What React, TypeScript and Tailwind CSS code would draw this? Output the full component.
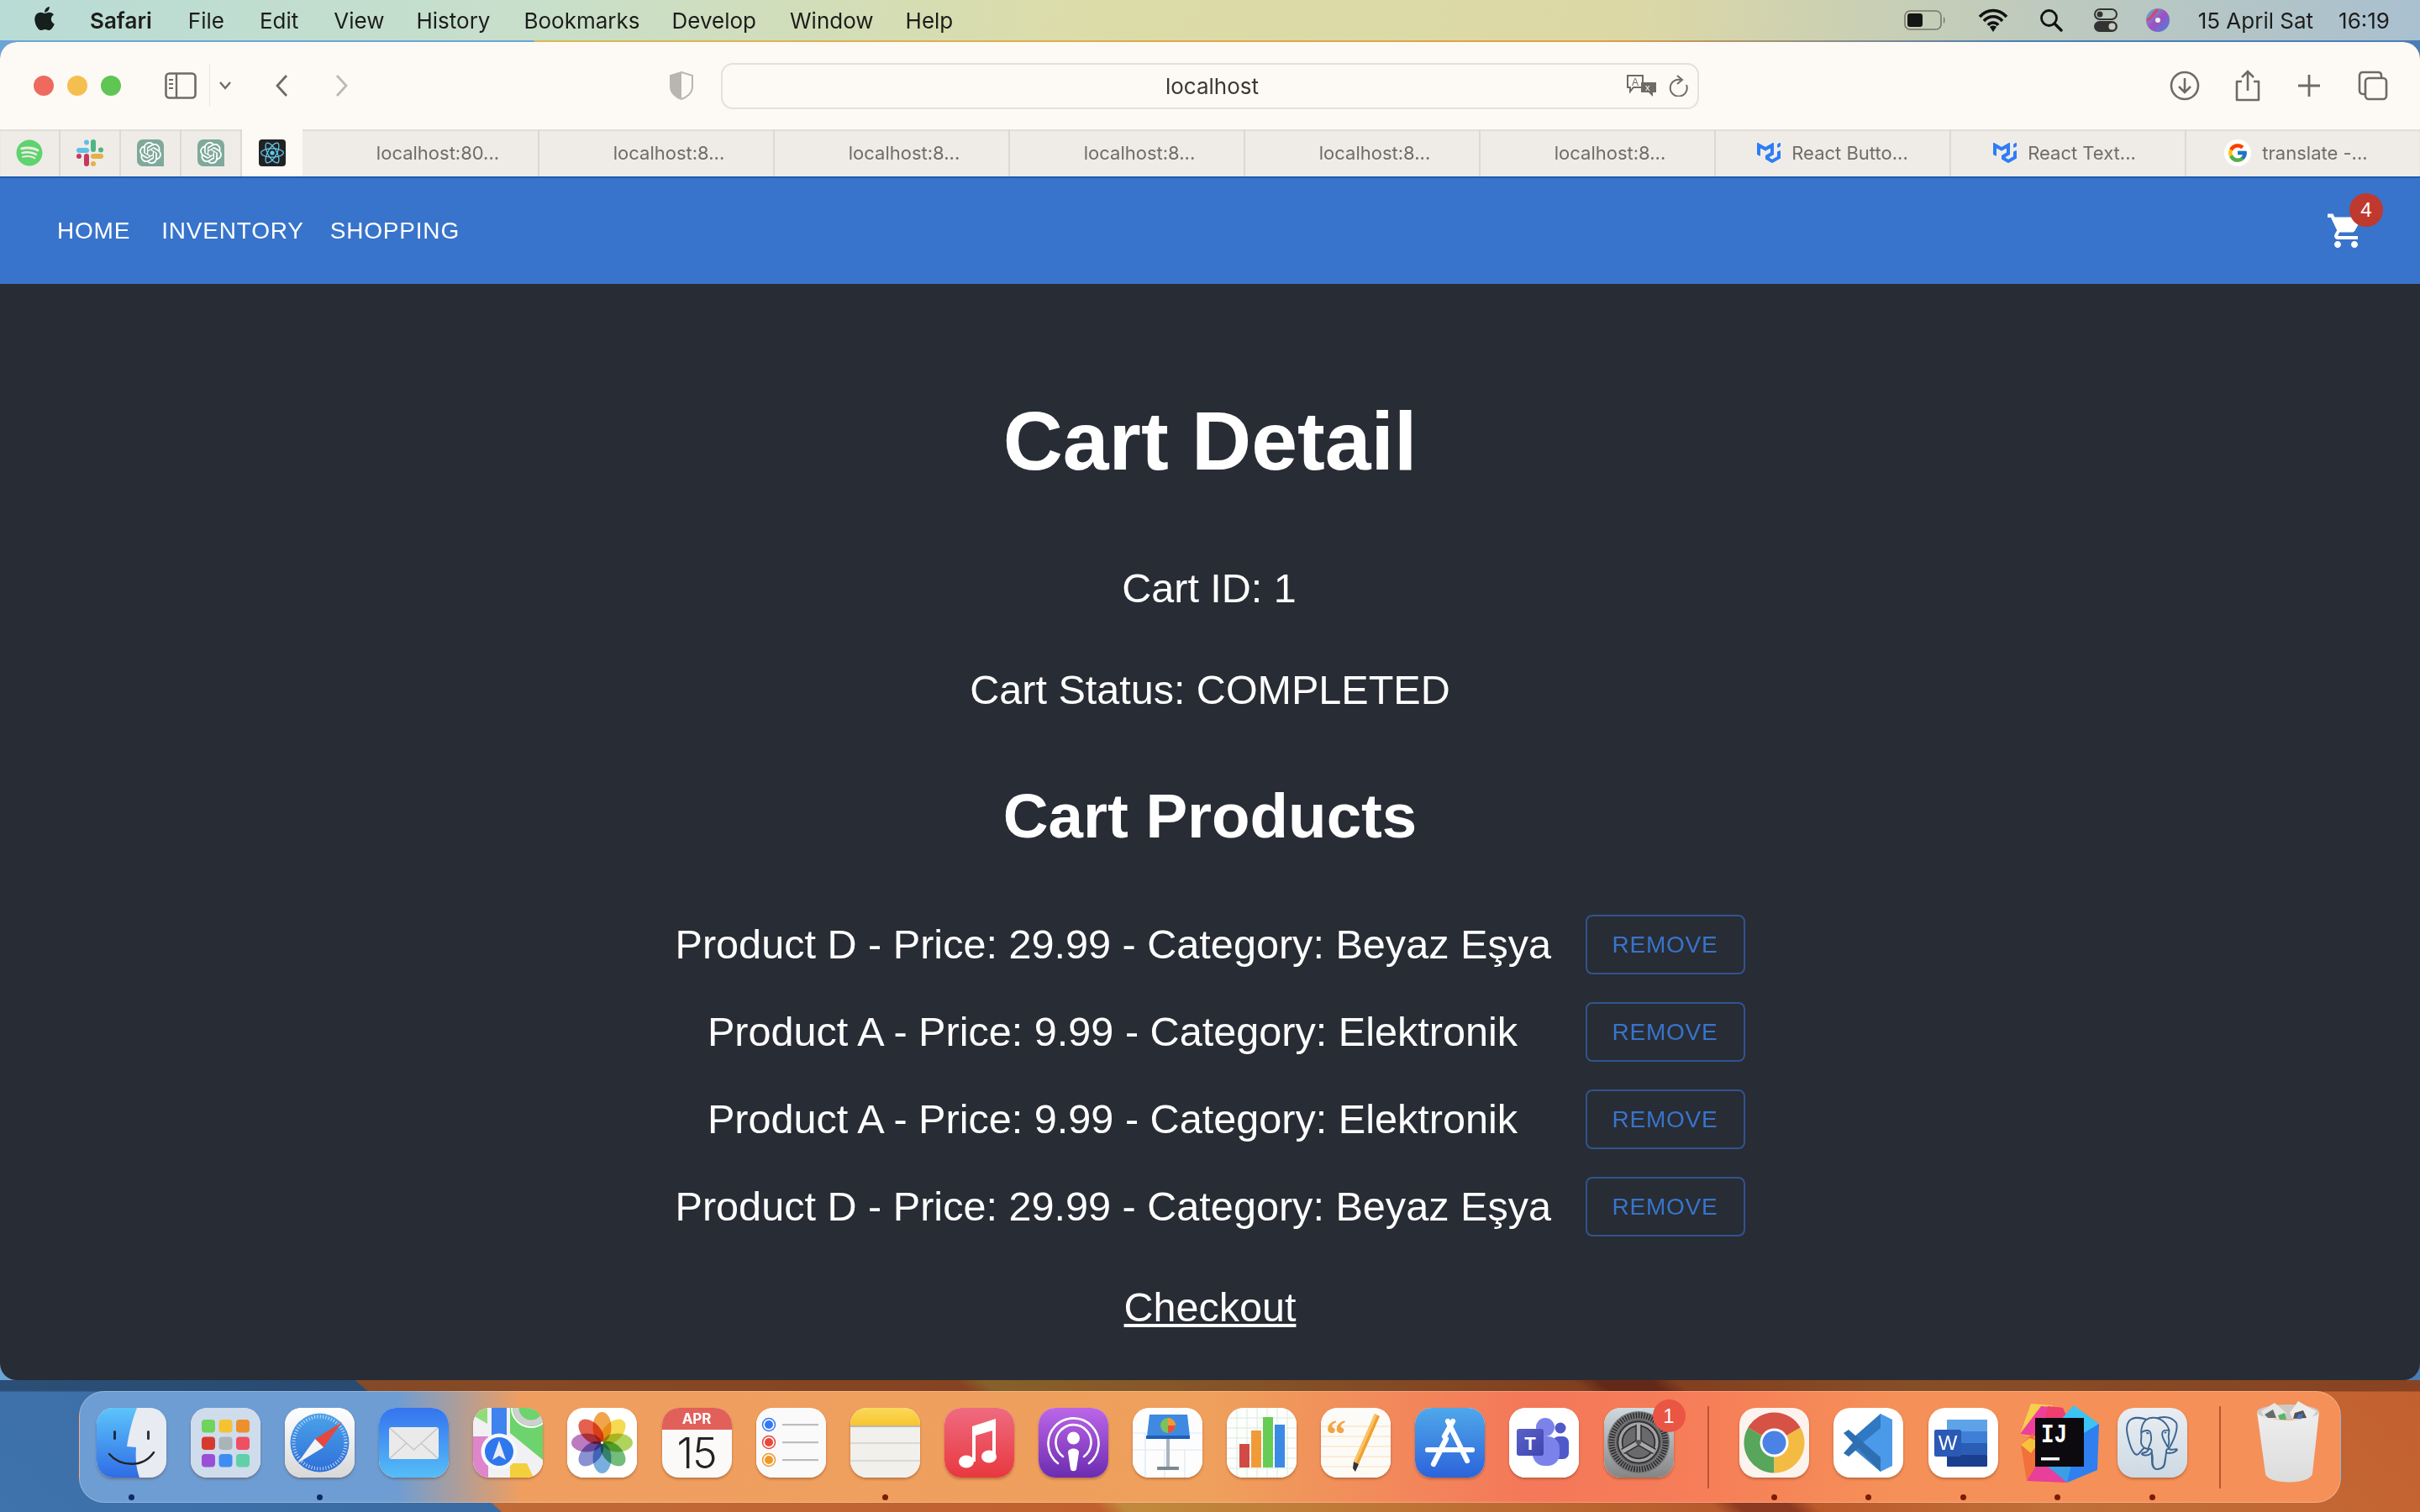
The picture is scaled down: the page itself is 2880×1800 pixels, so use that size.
import React from "react";
import { FaApple, FaSpotify } from "react-icons/fa";
import { FcGoogle } from "react-icons/fc";
import { SiMui, SiOpenai, SiReact, SiPostgresql } from "react-icons/si";

const Tile = ({ children, cls = "bg-white" }: { children: React.ReactNode; cls?: string }) => (
  <div className={`w-[83px] h-[83px] rounded-[20px] overflow-hidden shadow-[0_2px_3px_rgba(90,40,10,0.35)] ${cls}`}>
    <svg viewBox="0 0 83 83" className="w-[83px] h-[83px] block">{children}</svg>
  </div>
);

const Finder = () => (
  <Tile>
    <defs><linearGradient id="fb" x1="0" y1="0" x2="0" y2="1"><stop offset="0" stopColor="#5cc4fa" /><stop offset="1" stopColor="#2f6ce6" /></linearGradient></defs>
    <rect width="83" height="83" fill="url(#fb)" />
    <path d="M48 0C42 15 38 32 36 46L47 47C46 60 47 72 51 83L83 83L83 0Z" fill="#e8ebf1" />
    <rect x="20" y="27" width="3" height="11" rx="1.5" fill="#1d2a44" />
    <rect x="60" y="27" width="3" height="11" rx="1.5" fill="#333" />
    <path d="M15 55C28 70 55 72 68 53" fill="none" stroke="#222" strokeWidth="2.4" strokeLinecap="round" />
  </Tile>
);

const Launchpad = () => {
  const c = ["#6fd35c", "#f6c232", "#ee8f2e", "#d8392e", "#aab4b8", "#ee4f62", "#9a4fd6", "#3f8cf2", "#5fd0a8"];
  return (
    <Tile>
      <rect width="83" height="83" fill="#cfdcec" />
      {c.map((f, i) => (
        <rect key={i} x={13 + (i % 3) * 20.5} y={14 + Math.floor(i / 3) * 20.5} width="16" height="15.5" rx="4" fill={f} />
      ))}
    </Tile>
  );
};

const Safari = () => (
  <Tile>
    <defs><linearGradient id="sf" x1="0" y1="0" x2="0" y2="1"><stop offset="0" stopColor="#fff" /><stop offset="1" stopColor="#d8d8d8" /></linearGradient>
      <linearGradient id="sb" x1="0" y1="0" x2="0" y2="1"><stop offset="0" stopColor="#4ba3ea" /><stop offset="1" stopColor="#2f6fd8" /></linearGradient></defs>
    <rect width="83" height="83" fill="url(#sf)" />
    <circle cx="41.5" cy="41.5" r="35" fill="url(#sb)" />
    <circle cx="41.5" cy="41.5" r="31" fill="none" stroke="#e8f1fb" strokeWidth="4" strokeDasharray="0.8 2.6" />
    <polygon points="68,17 36,37 46,47" fill="#e5483c" />
    <polygon points="15,66 36,37 46,47" fill="#f4f4f4" />
  </Tile>
);

const Mail = () => (
  <Tile>
    <defs><linearGradient id="ml" x1="0" y1="0" x2="0" y2="1"><stop offset="0" stopColor="#3574ee" /><stop offset="1" stopColor="#55bdf8" /></linearGradient></defs>
    <rect width="83" height="83" fill="url(#ml)" />
    <rect x="12" y="23" width="59" height="38" rx="3" fill="#eaeaea" />
    <path d="M13 24L41.5 50L70 24M13 60L33 42M70 60L50 42" fill="none" stroke="#c8c8c8" strokeWidth="1.6" />
  </Tile>
);

const Maps = () => (
  <Tile>
    <rect width="83" height="83" fill="#f1f1f4" />
    <polygon points="44,0 83,0 83,62 44,30" fill="#6dd36c" />
    <polygon points="0,0 17,0 17,19 0,9" fill="#8fdc7a" />
    <rect x="22" y="0" width="18" height="36" fill="#3f83ee" />
    <rect x="0" y="34" width="18" height="49" fill="#de85cc" />
    <polygon points="44,66 64,66 72,83 44,83" fill="#f4cf3c" />
    <circle cx="69" cy="0" r="18" fill="#6dd36c" stroke="#cfcfd2" strokeWidth="7" />
    <circle cx="69" cy="0" r="23" fill="none" stroke="#fff" strokeWidth="2" />
    <circle cx="31" cy="52" r="21.5" fill="#f6f8fb" />
    <circle cx="31" cy="52" r="17" fill="#2f78ec" />
    <path d="M31 39L39 62L31 57L23 62Z" fill="#e9edf4" />
  </Tile>
);

const Photos = () => {
  const c = ["#f09a36", "#f5d63f", "#a7cf4c", "#62b56e", "#6aa6dc", "#7e86cc", "#b56cb8", "#e44e3a"];
  return (
    <Tile>
      <rect width="83" height="83" fill="#fff" />
      {c.map((f, i) => (
        <ellipse key={i} cx="41.5" cy="23" rx="11" ry="18" fill={f} opacity="0.9" className="mix-blend-multiply" transform={`rotate(${i * 45} 41.5 41.5)`} />
      ))}
      <circle cx="41.5" cy="41.5" r="1.5" fill="#fff" />
    </Tile>
  );
};

const Calendar = () => (
  <div className="w-[83px] h-[83px] rounded-[20px] overflow-hidden bg-[#fbfaf9] shadow-[0_2px_3px_rgba(90,40,10,0.35)] flex flex-col items-center font-['Inter',sans-serif]">
    <div className="w-full h-[26px] bg-[#e2605a] text-white text-[17px] leading-[26px] font-bold text-center">APR</div>
    <div className="text-[#222] text-[50px] leading-[56px] font-light tracking-[-1px]">15</div>
  </div>
);

const Reminders = () => (
  <Tile>
    <rect width="83" height="83" fill="#fbfafa" />
    {[["#3478f6", 20], ["#e9483d", 41], ["#ee9a2a", 62]].map(([f, y], i) => (
      <g key={i}>
        <circle cx="15" cy={y as number} r="7.5" fill="none" stroke={f as string} strokeWidth="1.5" />
        <circle cx="15" cy={y as number} r="5" fill={f as string} />
        <rect x="31" y={(y as number) - 1} width="43" height="2.2" fill="#bcbcbc" />
      </g>
    ))}
  </Tile>
);

const Notes = () => (
  <Tile>
    <defs><linearGradient id="nt" x1="0" y1="0" x2="0" y2="1"><stop offset="0" stopColor="#fbd95a" /><stop offset="1" stopColor="#f7c52f" /></linearGradient></defs>
    <rect width="83" height="83" fill="#f2f0ec" />
    <rect width="83" height="21" fill="url(#nt)" />
    <rect y="21" width="83" height="2" fill="#bdb8ae" />
    <rect y="41" width="83" height="2" fill="#dcd9d3" />
    <rect y="62" width="83" height="2" fill="#dcd9d3" />
  </Tile>
);

const Music = () => (
  <Tile>
    <defs><linearGradient id="mu" x1="0" y1="0" x2="0" y2="1"><stop offset="0" stopColor="#ef6b80" /><stop offset="1" stopColor="#e8383f" /></linearGradient></defs>
    <rect width="83" height="83" fill="url(#mu)" />
    <path d="M33 22L61 13V57H57V27L37 33V64H33Z" fill="#fff" />
    <ellipse cx="26" cy="64" rx="9" ry="7.5" fill="#fff" />
    <ellipse cx="53" cy="58" rx="9" ry="7.5" fill="#fff" />
  </Tile>
);

const Podcasts = () => (
  <Tile>
    <defs><linearGradient id="po" x1="0" y1="0" x2="0" y2="1"><stop offset="0" stopColor="#bc66e8" /><stop offset="1" stopColor="#6c2cb0" /></linearGradient></defs>
    <rect width="83" height="83" fill="url(#po)" />
    <path d="M23 66A30 30 0 1 1 60 66" fill="none" stroke="#fff" strokeWidth="2.6" strokeLinecap="round" />
    <path d="M29 58A21 21 0 1 1 54 58" fill="none" stroke="#fff" strokeWidth="2.6" strokeLinecap="round" />
    <circle cx="41.5" cy="36" r="7.5" fill="#fff" />
    <path d="M35 53C35 47 48 47 48 53L45 73C44 76 39 76 38 73Z" fill="#fff" />
  </Tile>
);

const Keynote = () => (
  <Tile>
    <rect width="83" height="83" fill="#fdfdfe" />
    <path d="M0 30H83M0 50H83M15 30V83M38 50V83M62 50V83" stroke="#dbe7f3" strokeWidth="1.2" fill="none" />
    <polygon points="20,8 65,8 68,34 17,34" fill="#3f8ae0" />
    <rect x="16" y="33" width="52" height="4" fill="#1f5fb8" />
    <circle cx="42" cy="21" r="9" fill="#7fc25a" />
    <path d="M42 21V12A9 9 0 0 1 51 21Z" fill="#ef9a34" />
    <path d="M42 21H51A9 9 0 0 1 42 30Z" fill="#e2533f" />
    <rect x="40" y="37" width="4" height="36" fill="#a9b4c0" />
    <rect x="29" y="70" width="26" height="4" rx="1" fill="#7d8790" />
  </Tile>
);

const Numbers = () => (
  <Tile>
    <rect width="83" height="83" fill="#fdfefd" />
    <path d="M0 12H83M0 24H83M0 36H83M0 48H83M0 60H83M0 72H83M12 0V83M24 0V83M36 0V83M48 0V83M60 0V83M72 0V83" stroke="#d8ecd8" strokeWidth="1" />
    <rect x="15" y="43" width="12" height="28" fill="#d04a46" />
    <rect x="29" y="27" width="12" height="44" fill="#f09b38" />
    <rect x="43" y="11" width="12" height="60" fill="#67cc55" />
    <rect x="57" y="20" width="12" height="51" fill="#3b8ae6" />
  </Tile>
);

const Pages = () => (
  <Tile>
    <rect width="83" height="83" fill="#fdfbf7" />
    <path d="M0 22H83M0 34H83M0 46H83M0 58H83M0 70H83" stroke="#fbe7cd" strokeWidth="1.6" />
    <text x="6" y="48" fontFamily="Liberation Serif, serif" fontSize="48" fontWeight="700" fill="#f0a542">“</text>
    <path d="M64 7L70 10L45 67L39 64Z" fill="#f0a030" />
    <path d="M39 64L45 67L41 76L38 72Z" fill="#333" />
    <path d="M64 7L67 8.5L42 65.5L39 64Z" fill="#f8c465" />
  </Tile>
);

const AppStore = () => (
  <Tile>
    <defs><linearGradient id="as" x1="0" y1="0" x2="0" y2="1"><stop offset="0" stopColor="#4fa8ea" /><stop offset="1" stopColor="#2c63db" /></linearGradient></defs>
    <rect width="83" height="83" fill="url(#as)" />
    <path d="M22 67L37 37M45 16L35 34M39 16L62 63M15 50H68" stroke="#fff" strokeWidth="6.2" strokeLinecap="round" fill="none" />
  </Tile>
);

const Teams = () => (
  <Tile>
    <defs><linearGradient id="tm" x1="0" y1="0" x2="1" y2="1"><stop offset="0" stopColor="#5a62c8" /><stop offset="1" stopColor="#3f45b0" /></linearGradient></defs>
    <rect width="83" height="83" fill="#fff" />
    <circle cx="61" cy="24" r="6.5" fill="#5059c9" />
    <rect x="52" y="34" width="19" height="27" rx="7" fill="#5059c9" />
    <circle cx="43" cy="23" r="11" fill="#7b83eb" />
    <rect x="28" y="34" width="32" height="35" rx="14" fill="#7b83eb" />
    <rect x="9" y="25" width="32" height="32" rx="3" fill="url(#tm)" />
    <text x="25" y="50" textAnchor="middle" fontFamily="Liberation Sans, sans-serif" fontWeight="700" fontSize="22" fill="#fff">T</text>
  </Tile>
);

const Settings = () => (
  <div className="relative">
    <Tile>
      <defs><linearGradient id="se" x1="0" y1="0" x2="0" y2="1"><stop offset="0" stopColor="#cfd9df" /><stop offset="1" stopColor="#858585" /></linearGradient></defs>
      <rect width="83" height="83" fill="url(#se)" />
      <circle cx="41" cy="41" r="37" fill="#77777a" />
      <circle cx="41" cy="41" r="32" fill="none" stroke="#2a2a2c" strokeWidth="7" strokeDasharray="1.5 1.7" />
      <circle cx="41" cy="41" r="27" fill="#5e5e60" />
      <circle cx="41" cy="41" r="22" fill="#6a6a6c" stroke="#2f2f31" strokeWidth="7" />
      <circle cx="41" cy="41" r="22" fill="none" stroke="#a2a2a4" strokeWidth="3.5" />
      <path d="M41 41V20M41 41L22 52M41 41L60 52" stroke="#2f2f31" strokeWidth="7.5" />
      <path d="M41 41V19M41 41L22 52M41 41L60 52" stroke="#a9a9ab" strokeWidth="4.5" />
      <circle cx="41" cy="41" r="3" fill="#555" />
    </Tile>
    <div className="absolute left-[58px] top-[-10px] w-[39px] h-[39px] rounded-full bg-[#ea5544] text-white text-[24px] leading-[39px] text-center font-['Liberation_Sans',sans-serif]">1</div>
  </div>
);

const Chrome = () => (
  <Tile cls="bg-[#fdf3ee]">
    <path d="M41.500 41.500L10.300 23.500A36 36 0 0 1 72.700 23.500Z" fill="#d65244" />
    <path d="M41.500 41.500L10.300 23.500A36 36 0 0 0 41.500 77.500Z" fill="#58a55c" />
    <path d="M41.500 41.500L72.700 23.500A36 36 0 0 1 41.500 77.500Z" fill="#f3bb42" />
    <circle cx="41.5" cy="41.5" r="17" fill="#fff" />
    <circle cx="41.5" cy="41.5" r="14" fill="#4b82e6" />
  </Tile>
);

const VSCode = () => (
  <Tile>
    <polygon points="56,7 70,14 70,69 56,76 30,42" fill="#4b9ae9" />
    <polygon points="56,7 56,24 34,42 24,35" fill="#2f78c2" />
    <polygon points="56,76 56,59 34,42 24,49" fill="#3a83cc" />
    <polygon points="12,30 18,26 56,59 56,76" fill="#2e6fb2" />
    <polygon points="12,54 18,58 34,44 26,38" fill="#2e6fb2" />
  </Tile>
);

const Word = () => (
  <Tile>
    <rect x="22" y="14" width="48" height="14" fill="#5ea3e8" />
    <rect x="22" y="28" width="48" height="14" fill="#3f80d6" />
    <rect x="22" y="42" width="48" height="14" fill="#2a5db5" />
    <rect x="22" y="56" width="48" height="14" rx="1" fill="#1a3f8e" />
    <rect x="7" y="26" width="32" height="32" rx="2" fill="#2a5ab5" />
    <text x="23" y="50" textAnchor="middle" fontFamily="Liberation Sans, sans-serif" fontSize="24" fill="#fff">W</text>
  </Tile>
);

const Idea = () => (
  <svg viewBox="0 0 83 83" className="w-[83px] h-[83px] overflow-visible">
    <polygon points="10,-5 36,-3 30,40 -3,31" fill="#f7cf4a" />
    <polygon points="22,-2 48,0 54,40 -3,31" fill="#ee3f9e" />
    <polygon points="30,-2 48,0 60,28 22,30" fill="#ee3f6e" />
    <polygon points="-2,44 12,30 26,60 5,87" fill="#f2703c" />
    <polygon points="8,36 20,40 10,54 -2,44" fill="#f6c23c" />
    <polygon points="5,87 28,50 53,89" fill="#e83f9a" />
    <polygon points="61,-3 91,19 60,50 40,20" fill="#3cc4f4" />
    <polygon points="91,19 89,74 53,89 40,50" fill="#2f7ff0" />
    <polygon points="30,70 53,89 60,60" fill="#3a9fe6" />
    <rect x="15" y="12" width="58" height="58" fill="#0c0a0e" />
    <text x="22" y="41" textLength="31" lengthAdjust="spacingAndGlyphs" fontFamily="Liberation Mono, monospace" fontWeight="700" fontSize="32" fill="#fff">IJ</text>
    <rect x="22" y="59" width="22" height="3.5" fill="#fff" />
  </svg>
);

const Postgres = () => (
  <div className="w-[83px] h-[83px] rounded-[20px] bg-[linear-gradient(180deg,#e9eef3,#cdd9e3)] flex items-center justify-center shadow-[0_2px_3px_rgba(90,40,10,0.35)]">
    <SiPostgresql className="w-[64px] h-[64px] text-[#3d6590]" />
  </div>
);

const Trash = () => (
  <svg viewBox="0 0 83 83" className="w-[83px] h-[83px] overflow-visible">
    <defs><linearGradient id="tr" x1="0" y1="0" x2="0" y2="1"><stop offset="0" stopColor="#eeeeee" /><stop offset="1" stopColor="#dcdcdc" /></linearGradient></defs>
    <path d="M5 5C20 18 62 18 79 5L71 78C69 92 17 92 15 78Z" fill="url(#tr)" />
    <ellipse cx="42" cy="5" rx="37" ry="9" fill="#cfc9c5" />
    <polygon points="10,4 26,-6 40,6 34,14 14,12" fill="#e6e6e6" />
    <polygon points="44,6 54,-8 66,-1 76,4 70,12 48,14" fill="#ececec" />
    <polygon points="14,8 24,2 28,12 18,12" fill="#6a6a6a" />
    <polygon points="30,9 38,6 40,14 32,14" fill="#59b46a" />
    <polygon points="50,6 60,3 64,12 48,13" fill="#54524e" />
    <polygon points="54,8 60,7 58,13 52,13" fill="#3f74c6" />
  </svg>
);

const DockItem = ({ children, dot }: { children: React.ReactNode; dot?: string }) => (
  <div className="flex flex-col items-center w-[83px] shrink-0">
    {children}
    <div className={`mt-[20px] w-[7px] h-[7px] rounded-full ${dot ?? "bg-transparent"}`} />
  </div>
);

const Tab = ({ icon, active }: { icon: React.ReactNode; active?: boolean }) => (
  <div className={`w-[72px] h-full flex items-center justify-center shrink-0 ${active ? "bg-[#fdfaf5] w-[71px]" : "border-r-2 border-[#dcd9d3]"}`}>{icon}</div>
);

const TextTab = ({ text, icon, last, cls = "w-[280px]" }: { text: string; icon?: React.ReactNode; last?: boolean; cls?: string }) => (
  <div className={`h-full shrink-0 flex items-center justify-center gap-[13px] text-[22px] text-[#6f6d6a] ${cls} ${last ? "" : "border-r-2 border-[#dcd9d3]"}`}>
    {icon}
    <span>{text}</span>
  </div>
);

const Openai = () => (
  <div className="w-[32px] h-[32px] rounded-[7px] rounded-br-none bg-[#7fa99b] flex items-center justify-center">
    <SiOpenai className="w-[26px] h-[26px] text-white" />
  </div>
);

const Slack = () => (
  <svg viewBox="0 0 32 32" className="w-[32px] h-[32px]">
    <rect x="0" y="10" width="15" height="6" rx="3" fill="#62bfe4" />
    <circle cx="12" cy="3.5" r="3" fill="#62bfe4" />
    <rect x="17" y="0" width="6" height="15" rx="3" fill="#4fb583" />
    <circle cx="29" cy="12.5" r="3" fill="#4fb583" />
    <rect x="17" y="17" width="15" height="6" rx="3" fill="#e4b04c" />
    <circle cx="20" cy="29" r="3" fill="#e4b04c" />
    <rect x="9" y="17" width="6" height="15" rx="3" fill="#c9375c" />
    <circle cx="3" cy="20" r="3" fill="#c9375c" />
  </svg>
);

const Row = ({ text }: { text: string }) => (
  <div className="flex items-center h-[71px] mb-[33px]">
    <div className="w-[1041px] text-center text-[48.6px] text-white whitespace-nowrap">{text}</div>
    <button className="ml-[42px] w-[190px] h-[71px] rounded-[8px] border-2 border-[#2f5490] text-[#3874cb] text-[28px] tracking-[0.8px]">REMOVE</button>
  </div>
);

export default function App() {
  return (
    <div className="w-[2880px] h-[1800px] overflow-hidden flex flex-col font-['Liberation_Sans',sans-serif] bg-[linear-gradient(90deg,#6aa5d8_0,#6aa5d8_635px,#d9b955_636px,#e0a044_1900px,#4a7db8_2400px,#4a7db8_100%)]">
      {/* menu bar */}
      <div className="h-[48px] shrink-0 flex items-center font-['Inter',sans-serif] text-[26px] text-[#1d1d1b] bg-[linear-gradient(90deg,#b9dcd6_0,#c8dfca_640px,#dcdca8_1300px,#dcd8a6_1950px,#c4cdb8_2300px,#a9c0d0_2880px)]">
        <FaApple className="ml-[38px] w-[30px] h-[32px] text-[#15201c] mb-[4px]" />
        <div className="ml-[39px] font-semibold">Safari</div>
        <div className="ml-[43px]">File</div>
        <div className="ml-[42px]">Edit</div>
        <div className="ml-[42px]">View</div>
        <div className="ml-[38px]">History</div>
        <div className="ml-[40px]">Bookmarks</div>
        <div className="ml-[38px]">Develop</div>
        <div className="ml-[40px]">Window</div>
        <div className="ml-[38px]">Help</div>
        <div className="flex-1" />
        <svg viewBox="0 0 50 24" className="w-[50px] h-[24px]">
          <rect x="1" y="1" width="43" height="22" rx="6" fill="none" stroke="#77776a" strokeWidth="1.6" />
          <rect x="4" y="4" width="18" height="16" rx="3" fill="#151515" />
          <path d="M47 8C49 9 49 15 47 16Z" fill="#77776a" />
        </svg>
        <svg viewBox="0 0 36 28" className="ml-[38px] w-[36px] h-[28px]">
          <path d="M2 10C11 0 25 0 34 10M7 15C13 8 23 8 29 15M12 20C15 16 21 16 24 20" fill="none" stroke="#111" strokeWidth="3.6" />
          <path d="M14 22L18 28L22 22C20 20 16 20 14 22Z" fill="#111" />
        </svg>
        <svg viewBox="0 0 28 28" className="ml-[37px] w-[28px] h-[28px]">
          <circle cx="11.5" cy="11.5" r="9" fill="none" stroke="#111" strokeWidth="2.8" />
          <path d="M18 18L26 26" stroke="#111" strokeWidth="3.4" strokeLinecap="round" />
        </svg>
        <svg viewBox="0 0 28 28" className="ml-[37px] w-[28px] h-[28px]">
          <rect x="1" y="1" width="26" height="12" rx="6" fill="none" stroke="#333" strokeWidth="2" />
          <circle cx="7" cy="7" r="3.5" fill="#333" />
          <rect x="0" y="15" width="28" height="13" rx="6.5" fill="#333" />
          <circle cx="21.5" cy="21.5" r="4" fill="#c8cdbb" />
        </svg>
        <svg viewBox="0 0 28 28" className="ml-[34px] w-[28px] h-[28px]">
          <defs><linearGradient id="si" x1="0" y1="0" x2="1" y2="1"><stop offset="0" stopColor="#49c6c8" /><stop offset="0.5" stopColor="#a04fc0" /><stop offset="1" stopColor="#3a8ae0" /></linearGradient></defs>
          <circle cx="14" cy="14" r="14" fill="url(#si)" />
          <circle cx="14" cy="14" r="3" fill="#f0f0f0" />
          <path d="M1 14C8 12 8 4 14 2" fill="none" stroke="#d9436f" strokeWidth="3" />
        </svg>
        <div className="ml-[34px] whitespace-nowrap">15 April Sat</div>
        <div className="ml-[30px] mr-[36px]">16:19</div>
      </div>

      {/* browser window */}
      <div className="mt-[2px] h-[1593px] shrink-0 rounded-[20px] overflow-hidden flex flex-col bg-[#282c34]">
        <div className="h-[104px] shrink-0 bg-[#fdfaf5] flex items-center pl-[40px]">
          <div className="w-[24px] h-[24px] rounded-full bg-[#ee6a5f]" />
          <div className="ml-[16px] w-[24px] h-[24px] rounded-full bg-[#f5bf4f]" />
          <div className="ml-[16px] w-[24px] h-[24px] rounded-full bg-[#61c554]" />
          <svg viewBox="0 0 38 32" className="ml-[52px] w-[38px] h-[32px]">
            <rect x="1.5" y="1.5" width="35" height="29" rx="4" fill="none" stroke="#6e6b66" strokeWidth="2.6" />
            <path d="M14 2V30" stroke="#6e6b66" strokeWidth="2.4" />
            <path d="M5 9H10M5 14H10M5 19H10" stroke="#6e6b66" strokeWidth="2" />
          </svg>
          <div className="ml-[15px] w-px h-[50px] bg-[#e8e5df]" />
          <svg viewBox="0 0 16 10" className="ml-[10px] w-[16px] h-[10px]"><path d="M2 1L8 8L14 1" fill="none" stroke="#6e6b66" strokeWidth="2.4" /></svg>
          <svg viewBox="0 0 16 28" className="ml-[51px] w-[16px] h-[28px]"><path d="M14 2L3 14L14 26" fill="none" stroke="#6e6b66" strokeWidth="2.8" /></svg>
          <svg viewBox="0 0 16 28" className="ml-[56px] w-[16px] h-[28px]"><path d="M2 2L13 14L2 26" fill="none" stroke="#bdbab5" strokeWidth="2.8" /></svg>
          <svg viewBox="0 0 28 34" className="ml-[382px] w-[28px] h-[34px]">
            <path d="M14 1L27 5V18C27 26 20 31 14 33C8 31 1 26 1 18V5Z" fill="#fdfaf5" stroke="#b9b6b1" strokeWidth="2" />
            <path d="M14 1L1 5V18C1 26 8 31 14 33Z" fill="#b9b6b1" />
          </svg>
          <div className="ml-[33px] w-[1164px] h-[55px] rounded-[14px] border-2 border-[#e4e1dc] flex items-center shrink-0">
            <div className="flex-1 text-center pl-[90px] font-['Inter',sans-serif] text-[26px] text-[#3a3937]">localhost</div>
            <svg viewBox="0 0 38 28" className="w-[38px] h-[28px]">
              <path d="M2 2H20V16H9L5 21V16H2Z" fill="#fdfaf5" stroke="#6e6b66" strokeWidth="2" />
              <path d="M18 10H36V22H32V27L27 22H18Z" fill="#6e6b66" />
              <text x="7" y="14" fontFamily="Liberation Sans, sans-serif" fontSize="12" fill="#6e6b66">A</text>
              <text x="23" y="20" fontFamily="Liberation Sans, sans-serif" fontSize="11" fill="#fff">x</text>
            </svg>
            <svg viewBox="0 0 24 26" className="ml-[13px] mr-[10px] w-[24px] h-[26px]">
              <path d="M14 6A10 10 0 1 0 21 12" fill="none" stroke="#6e6b66" strokeWidth="2" />
              <path d="M10 1L16 6L10 11" fill="none" stroke="#6e6b66" strokeWidth="2" />
            </svg>
          </div>
          <svg viewBox="0 0 36 36" className="ml-[560px] w-[36px] h-[36px]">
            <circle cx="18" cy="18" r="16" fill="none" stroke="#6e6b66" strokeWidth="2.6" />
            <path d="M18 9V26M11 19L18 26L25 19" fill="none" stroke="#6e6b66" strokeWidth="2.6" />
          </svg>
          <svg viewBox="0 0 32 38" className="ml-[41px] w-[32px] h-[38px]">
            <path d="M9 14H3V36H29V14H23" fill="none" stroke="#6e6b66" strokeWidth="2.6" strokeLinejoin="round" />
            <path d="M16 25V2M9 9L16 2L23 9" fill="none" stroke="#6e6b66" strokeWidth="2.6" />
          </svg>
          <svg viewBox="0 0 28 28" className="ml-[43px] w-[28px] h-[28px]"><path d="M14 1V27M1 14H27" stroke="#6e6b66" strokeWidth="2.8" /></svg>
          <svg viewBox="0 0 36 36" className="ml-[44px] w-[36px] h-[36px]">
            <path d="M8 28H6C3.500 28 2 26.500 2 24V6C2 3.500 3.500 2 6 2H24C26.500 2 28 3.500 28 6V8" fill="none" stroke="#6e6b66" strokeWidth="2.6" />
            <rect x="9" y="9" width="25" height="25" rx="4" fill="#fdfaf5" stroke="#6e6b66" strokeWidth="2.6" />
          </svg>
        </div>

        <div className="h-[56px] shrink-0 bg-[#efece7] flex font-['Inter',sans-serif] shadow-[inset_0_2px_2px_rgba(0,0,0,0.06)]">
          <Tab icon={<FaSpotify className="w-[32px] h-[32px] text-[#5fd36e]" />} />
          <Tab icon={<Slack />} />
          <Tab icon={<Openai />} />
          <Tab icon={<Openai />} />
          <Tab active icon={<div className="w-[32px] h-[32px] rounded-[4px] bg-[#222] flex items-center justify-center"><SiReact className="w-[28px] h-[28px] text-[#61c9ee]" /></div>} />
          <TextTab cls="w-[282px] pl-[42px]" text="localhost:80..." />
          <TextTab cls="w-[280px] pl-[30px]" text="localhost:8..." />
          <TextTab cls="w-[280px] pl-[30px]" text="localhost:8..." />
          <TextTab cls="w-[280px] pl-[30px]" text="localhost:8..." />
          <TextTab cls="w-[280px] pl-[30px]" text="localhost:8..." />
          <TextTab cls="w-[280px] pl-[30px]" text="localhost:8..." />
          <TextTab text="React Butto..." icon={<SiMui className="w-[28px] h-[28px] text-[#2e7df6]" />} />
          <TextTab cls="w-[280px] pr-[8px]" text="React Text..." icon={<SiMui className="w-[28px] h-[28px] text-[#2e7df6]" />} />
          <TextTab last cls="w-[279px] pr-[18px]" text="translate -..." icon={<div className="w-[32px] h-[32px] rounded-full bg-white flex items-center justify-center"><FcGoogle className="w-[26px] h-[26px]" /></div>} />
        </div>

        <nav className="h-[128px] shrink-0 bg-[#3874cb] border-t-2 border-[#1f5bb0] flex items-center text-white text-[28px] tracking-[0.8px]">
          <div className="ml-[68px]">HOME</div>
          <div className="ml-[37px]">INVENTORY</div>
          <div className="ml-[31px]">SHOPPING</div>
          <div className="flex-1" />
          <div className="relative mr-[64px] w-[48px] h-[48px]">
            <svg viewBox="0 0 24 24" className="w-[48px] h-[48px]" fill="#fff">
              <path d="M7 18c-1.100 0-1.990.9-1.990 2S5.900 22 7 22s2-.9 2-2-.9-2-2-2zM1 2v2h2l3.600 7.590-1.350 2.450c-.16.28-.25.61-.25.96 0 1.100.9 2 2 2h12v-2H7.420c-.14 0-.25-.11-.25-.25l.03-.12.9-1.830h7.450c.75 0 1.410-.41 1.750-1.030l3.580-6.490c.08-.14.12-.31.12-.48 0-.55-.45-1-1-1H5.210l-.94-2H1zm16 16c-1.100 0-1.990.9-1.990 2s.89 2 1.990 2 2-.9 2-2-.9-2-2-2z" />
            </svg>
            <div className="absolute left-[28px] top-[-21px] w-[40px] h-[40px] rounded-full bg-[#c0392f] text-white text-[24px] leading-[40px] text-center tracking-normal">4</div>
          </div>
        </nav>

        <main className="flex-1 flex flex-col items-center text-white">
          <h1 className="mt-[132px] text-[98.5px] leading-[110px] font-bold">Cart Detail</h1>
          <p className="mt-[92px] text-[48.5px] leading-[56px] -translate-x-px">Cart ID: 1</p>
          <p className="mt-[65px] text-[48.5px] leading-[56px]">Cart Status: COMPLETED</p>
          <h2 className="mt-[78px] text-[74.5px] leading-[90px] font-bold">Cart Products</h2>
          <div className="mt-[72px] flex flex-col">
            <Row text="Product D - Price: 29.99 - Category: Beyaz Eşya" />
            <Row text="Product A - Price: 9.99 - Category: Elektronik" />
            <Row text="Product A - Price: 9.99 - Category: Elektronik" />
            <Row text="Product D - Price: 29.99 - Category: Beyaz Eşya" />
          </div>
          <a className="mt-[23px] text-[48.5px] leading-[56px] underline">Checkout</a>
        </main>
      </div>

      {/* dock */}
      <div className="flex-1 pt-[13px] bg-[linear-gradient(180deg,rgba(0,0,0,0.3)_0,rgba(0,0,0,0.3)_13px,rgba(0,0,0,0)_14px),linear-gradient(42deg,#3f73ac_0,#3a6ba2_19.5%,#c06a38_19.6%,#c0602f_43%,#c08a3c_44%,#c07a38_52%,#b85a2c_67%,#8d3a22_68%,#8d3a22_70%,#bc5a2c_71%,#c07038_80%,#c45f30_100%)]">
        <div className="ml-[94px] w-[2692px] h-[133px] rounded-[30px] border border-white/25 pt-[19px] pl-[20px] flex bg-[linear-gradient(90deg,#6e9dd3_0,#6e9dd3_14%,#ef9e60_19.5%,#efa05c_50%,#f4785a_64%,#f67e58_72%,#f59058_80%,#f59058_100%)]">
          <div className="flex gap-[29.1px]">
            <DockItem dot="bg-[#0b2a66]"><Finder /></DockItem>
            <DockItem><Launchpad /></DockItem>
            <DockItem dot="bg-[#0b2a66]"><Safari /></DockItem>
            <DockItem><Mail /></DockItem>
            <DockItem><Maps /></DockItem>
            <DockItem><Photos /></DockItem>
            <DockItem><Calendar /></DockItem>
            <DockItem><Reminders /></DockItem>
            <DockItem dot="bg-[#7a1c00]"><Notes /></DockItem>
            <DockItem><Music /></DockItem>
            <DockItem><Podcasts /></DockItem>
            <DockItem><Keynote /></DockItem>
            <DockItem><Numbers /></DockItem>
            <DockItem><Pages /></DockItem>
            <DockItem><AppStore /></DockItem>
            <DockItem><Teams /></DockItem>
            <DockItem><Settings /></DockItem>
          </div>
          <div className="ml-[40px] w-[2px] h-[98px] -mt-[2px] bg-[#b8562f]" />
          <div className="ml-[36px] flex gap-[29.5px]">
            <DockItem dot="bg-[#7a1c00]"><Chrome /></DockItem>
            <DockItem dot="bg-[#7a1c00]"><VSCode /></DockItem>
            <DockItem dot="bg-[#7a1c00]"><Word /></DockItem>
            <DockItem dot="bg-[#7a1c00]"><Idea /></DockItem>
            <DockItem dot="bg-[#7a1c00]"><Postgres /></DockItem>
          </div>
          <div className="ml-[38px] w-[2px] h-[98px] -mt-[2px] bg-[#b8562f]" />
          <div className="ml-[38px]"><DockItem><Trash /></DockItem></div>
        </div>
      </div>
    </div>
  );
}
